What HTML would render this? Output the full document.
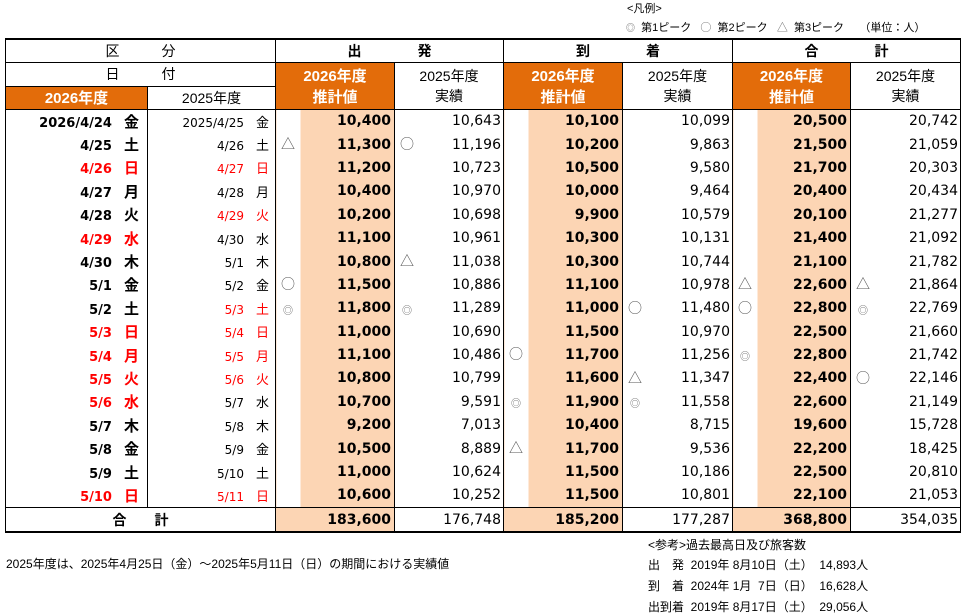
<!DOCTYPE html>
<html><head><meta charset="utf-8">
<style>
body{margin:0;width:964px;height:612px;background:#fff;position:relative;font-family:"Liberation Sans","Noto Sans CJK JP",sans-serif;color:#000;overflow:hidden}
.abs{position:absolute;white-space:nowrap}
table{position:absolute;left:5px;top:38px;border-collapse:collapse;table-layout:fixed;width:955px}
td{padding:0;border-left:1px solid #000;border-right:1px solid #000;position:relative;white-space:nowrap;overflow:hidden}
.h td{border:1px solid #000;text-align:center;font-size:14px}
.o{background:#e36c0a;color:#fff;font-weight:bold;font-size:15px!important}
.d td{height:23.4px;font-size:14px;font-family:"DejaVu Sans","Noto Sans CJK JP",sans-serif}
.d td.a{text-align:right;padding-right:8px;font-weight:bold;font-size:13px}
.d td.b{text-align:right;padding-right:6px;font-size:12px}
.a span,.b span{display:inline-block;margin-left:12px;font-family:"Noto Sans CJK JP",sans-serif}
.a span{font-size:15px}
.b span{font-size:13px}
.r{color:#f00}
td.p{background:linear-gradient(to right,#fff 24px,#fcd5b4 24px);text-align:right;padding-right:3px;font-weight:bold}
td.n{text-align:right;padding-right:2px;font-size:14px}
i{position:absolute;left:5px;top:1px;font-style:normal;font-size:14px;color:#555;font-weight:normal;font-family:"Noto Sans CJK JP",sans-serif}
i.s{font-size:10px;left:7px;top:5px;color:#666}
.t td{border:1px solid #000;border-bottom:2px solid #000;height:23px;font-size:14px;font-family:"DejaVu Sans","Noto Sans CJK JP",sans-serif}
table{border-top:2px solid #000}
</style></head><body>
<div class="abs" style="left:627px;top:0px;font-size:11px">&lt;凡例&gt;</div>
<div class="abs" style="left:626px;top:19px;font-size:11px"><span style="color:#666;font-size:9px">◎</span>&nbsp; 第1ピーク &nbsp;&nbsp;<span style="color:#666;font-family:'Noto Sans CJK JP'">○</span>&nbsp; 第2ピーク &nbsp;&nbsp;<span style="color:#666">△</span>&nbsp; 第3ピーク &nbsp;&nbsp;&nbsp;&nbsp;（単位：人）</div>
<table>
<colgroup><col style="width:142px"><col style="width:128px"><col style="width:119px"><col style="width:109px"><col style="width:119px"><col style="width:110px"><col style="width:118px"><col style="width:110px"></colgroup>
<tr class="h" style="height:23px"><td colspan="2">区　　　分</td><td colspan="2" style="font-weight:bold">出　　　　発</td><td colspan="2" style="font-weight:bold">到　　　　着</td><td colspan="2" style="font-weight:bold">合　　　　計</td></tr>
<tr class="h" style="height:24px"><td colspan="2">日　　　付</td><td rowspan="2" class="o">2026年度<br>推計値</td><td rowspan="2">2025年度<br>実績</td><td rowspan="2" class="o">2026年度<br>推計値</td><td rowspan="2">2025年度<br>実績</td><td rowspan="2" class="o">2026年度<br>推計値</td><td rowspan="2">2025年度<br>実績</td></tr>
<tr class="h" style="height:23px"><td class="o">2026年度</td><td>2025年度</td></tr>
<tr class="d"><td class="a">2026/4/24<span>金</span></td><td class="b">2025/4/25<span>金</span></td><td class="p">10,400</td><td class="n">10,643</td><td class="p">10,100</td><td class="n">10,099</td><td class="p">20,500</td><td class="n">20,742</td></tr>
<tr class="d"><td class="a">4/25<span>土</span></td><td class="b">4/26<span>土</span></td><td class="p"><i>△</i>11,300</td><td class="n"><i>○</i>11,196</td><td class="p">10,200</td><td class="n">9,863</td><td class="p">21,500</td><td class="n">21,059</td></tr>
<tr class="d"><td class="a r">4/26<span>日</span></td><td class="b r">4/27<span>日</span></td><td class="p">11,200</td><td class="n">10,723</td><td class="p">10,500</td><td class="n">9,580</td><td class="p">21,700</td><td class="n">20,303</td></tr>
<tr class="d"><td class="a">4/27<span>月</span></td><td class="b">4/28<span>月</span></td><td class="p">10,400</td><td class="n">10,970</td><td class="p">10,000</td><td class="n">9,464</td><td class="p">20,400</td><td class="n">20,434</td></tr>
<tr class="d"><td class="a">4/28<span>火</span></td><td class="b r">4/29<span>火</span></td><td class="p">10,200</td><td class="n">10,698</td><td class="p">9,900</td><td class="n">10,579</td><td class="p">20,100</td><td class="n">21,277</td></tr>
<tr class="d"><td class="a r">4/29<span>水</span></td><td class="b">4/30<span>水</span></td><td class="p">11,100</td><td class="n">10,961</td><td class="p">10,300</td><td class="n">10,131</td><td class="p">21,400</td><td class="n">21,092</td></tr>
<tr class="d"><td class="a">4/30<span>木</span></td><td class="b">5/1<span>木</span></td><td class="p">10,800</td><td class="n"><i>△</i>11,038</td><td class="p">10,300</td><td class="n">10,744</td><td class="p">21,100</td><td class="n">21,782</td></tr>
<tr class="d"><td class="a">5/1<span>金</span></td><td class="b">5/2<span>金</span></td><td class="p"><i>○</i>11,500</td><td class="n">10,886</td><td class="p">11,100</td><td class="n">10,978</td><td class="p"><i>△</i>22,600</td><td class="n"><i>△</i>21,864</td></tr>
<tr class="d"><td class="a">5/2<span>土</span></td><td class="b r">5/3<span>土</span></td><td class="p"><i class="s">◎</i>11,800</td><td class="n"><i class="s">◎</i>11,289</td><td class="p">11,000</td><td class="n"><i>○</i>11,480</td><td class="p"><i>○</i>22,800</td><td class="n"><i class="s">◎</i>22,769</td></tr>
<tr class="d"><td class="a r">5/3<span>日</span></td><td class="b r">5/4<span>日</span></td><td class="p">11,000</td><td class="n">10,690</td><td class="p">11,500</td><td class="n">10,970</td><td class="p">22,500</td><td class="n">21,660</td></tr>
<tr class="d"><td class="a r">5/4<span>月</span></td><td class="b r">5/5<span>月</span></td><td class="p">11,100</td><td class="n">10,486</td><td class="p"><i>○</i>11,700</td><td class="n">11,256</td><td class="p"><i class="s">◎</i>22,800</td><td class="n">21,742</td></tr>
<tr class="d"><td class="a r">5/5<span>火</span></td><td class="b r">5/6<span>火</span></td><td class="p">10,800</td><td class="n">10,799</td><td class="p">11,600</td><td class="n"><i>△</i>11,347</td><td class="p">22,400</td><td class="n"><i>○</i>22,146</td></tr>
<tr class="d"><td class="a r">5/6<span>水</span></td><td class="b">5/7<span>水</span></td><td class="p">10,700</td><td class="n">9,591</td><td class="p"><i class="s">◎</i>11,900</td><td class="n"><i class="s">◎</i>11,558</td><td class="p">22,600</td><td class="n">21,149</td></tr>
<tr class="d"><td class="a">5/7<span>木</span></td><td class="b">5/8<span>木</span></td><td class="p">9,200</td><td class="n">7,013</td><td class="p">10,400</td><td class="n">8,715</td><td class="p">19,600</td><td class="n">15,728</td></tr>
<tr class="d"><td class="a">5/8<span>金</span></td><td class="b">5/9<span>金</span></td><td class="p">10,500</td><td class="n">8,889</td><td class="p"><i>△</i>11,700</td><td class="n">9,536</td><td class="p">22,200</td><td class="n">18,425</td></tr>
<tr class="d"><td class="a">5/9<span>土</span></td><td class="b">5/10<span>土</span></td><td class="p">11,000</td><td class="n">10,624</td><td class="p">11,500</td><td class="n">10,186</td><td class="p">22,500</td><td class="n">20,810</td></tr>
<tr class="d"><td class="a r">5/10<span>日</span></td><td class="b r">5/11<span>日</span></td><td class="p">10,600</td><td class="n">10,252</td><td class="p">11,500</td><td class="n">10,801</td><td class="p">22,100</td><td class="n">21,053</td></tr>
<tr class="t"><td colspan="2" style="text-align:center;font-weight:bold;font-family:'Noto Sans CJK JP',sans-serif">合　　計</td><td style="background:#fcd5b4;text-align:right;padding-right:3px;font-weight:bold">183,600</td><td style="text-align:right;padding-right:2px">176,748</td><td style="background:#fcd5b4;text-align:right;padding-right:3px;font-weight:bold">185,200</td><td style="text-align:right;padding-right:2px">177,287</td><td style="background:#fcd5b4;text-align:right;padding-right:3px;font-weight:bold">368,800</td><td style="text-align:right;padding-right:2px">354,035</td></tr>
</table>
<div class="abs" style="left:6px;top:555px;font-size:12px">2025年度は、2025年4月25日（金）～2025年5月11日（日）の期間における実績値</div>
<div class="abs" style="left:648px;top:536px;font-size:12px">&lt;参考&gt;過去最高日及び旅客数</div>
<div class="abs" style="left:648px;top:556px;font-size:12px">出　発&nbsp; 2019年 8月10日（土）&nbsp; 14,893人</div>
<div class="abs" style="left:648px;top:577px;font-size:12px">到　着&nbsp; 2024年 1月&nbsp; 7日（日）&nbsp; 16,628人</div>
<div class="abs" style="left:648px;top:598px;font-size:12px">出到着&nbsp; 2019年 8月17日（土）&nbsp; 29,056人</div>
</body></html>
